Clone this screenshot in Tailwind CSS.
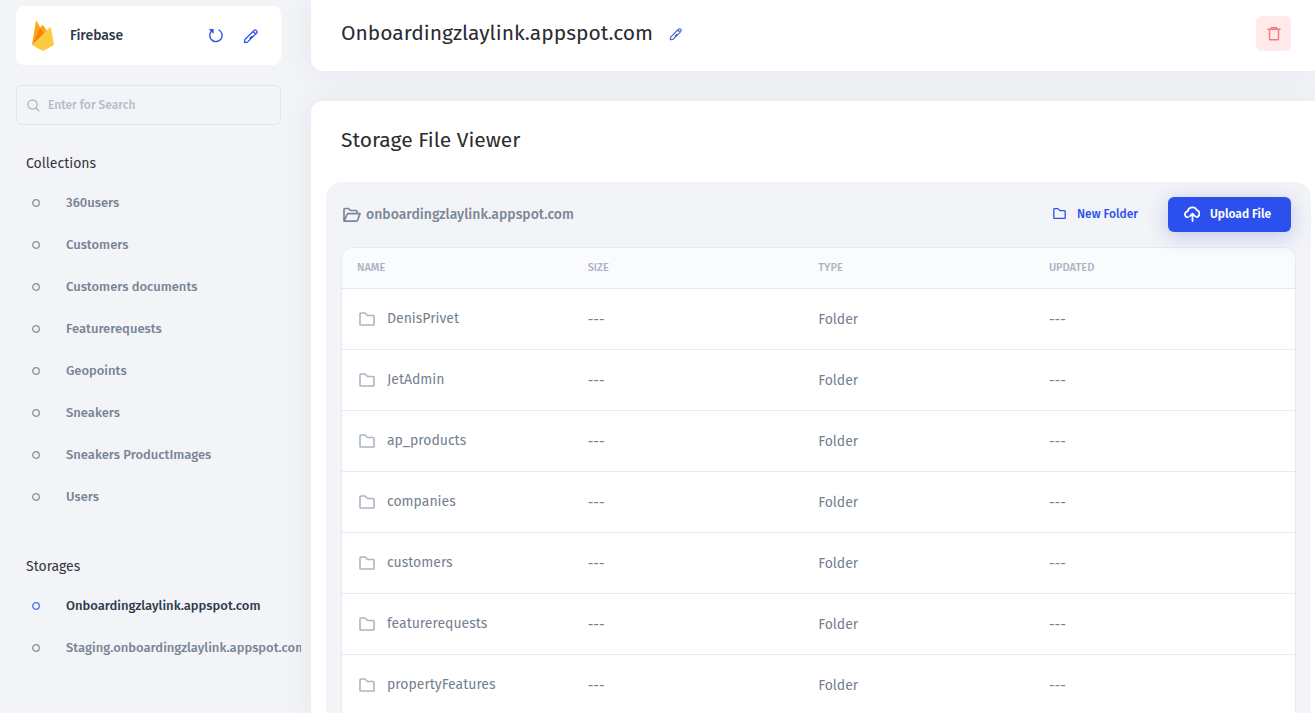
<!DOCTYPE html>
<html lang="en">
<head>
<meta charset="utf-8">
<meta name="viewport" content="width=device-width, initial-scale=1">
<title>Storage File Viewer</title>
<script src="https://cdn.jsdelivr.net/npm/@tailwindcss/browser@4"></script>
</head>
<body class="h-screen overflow-hidden bg-[#f3f4f8] font-['Fira_Sans','Noto_Sans',sans-serif] text-[#74808f]">
<svg class="hidden" aria-hidden="true">
  <symbol id="pencil" viewBox="0 0 16 16" fill="none" stroke="currentColor" stroke-width="1.3" stroke-linejoin="round" stroke-linecap="round"><path d="M1.500 14.500l.4-3L10.800 2.600q1.300-1.300 2.600 0t0 2.600L4.500 14.100zM10 3.400L12.600 6M7 10.200l1.800-1.800"/></symbol>
  <symbol id="folder" viewBox="0 0 18 16" fill="none" stroke="currentColor" stroke-width="1.6" stroke-linejoin="round"><path d="M2 13.500V3q0-1 1-1h4l2.500 2.500H15q1 0 1 1v8q0 .5-.5.5h-13q-.5 0-.5-.5z"/></symbol>
  <symbol id="ring" viewBox="0 0 8 8" fill="none" stroke="currentColor" stroke-width="1.3"><circle cx="4" cy="4" r="3.300"/></symbol>
</svg>
<div class="flex h-full">
  <aside class="w-[301px] shrink-0 overflow-hidden pl-4 pt-1.5">
    <div class="mr-5 flex h-[59px] items-center rounded-lg bg-white pl-4 pr-[22px]">
      <svg class="h-[30px] w-[22px]" viewBox="0 0 22 30"><path fill="#ffa712" d="M0 24L3.800.8Q4.200-.4 5 .6l3.200 6L10 4.600q.7-1 1.400 0L15 10z"/><path fill="#f4820b" d="M0 24L8.200 7l4.500 6z"/><path fill="#fcca3f" d="M0 24L17.800 6.400q.9-.6 1.200.5L22 24l-10 5.600q-1 .5-2 0z"/></svg>
      <span class="ml-4 grow text-[14px] font-medium text-[#2c3a4c]">Firebase</span>
      <button aria-label="Refresh" class="mr-[19px] text-[#2b50ed]"><svg class="size-4" viewBox="0 0 16 16" fill="none" stroke="currentColor" stroke-width="1.400" stroke-linecap="round" stroke-linejoin="round"><path d="M11 2a6.200 6.200 0 1 1-7 .6M1.900 1.800H5v3"/></svg></button>
      <button aria-label="Edit resource" class="text-[#2b50ed]"><svg class="size-4"><use href="#pencil"/></svg></button>
    </div>
    <label class="mr-5 mt-5 flex h-10 items-center gap-2 rounded-md border border-[#e1e5eb] pl-2.5">
      <svg class="size-[13px] text-[#b3bdca]" viewBox="0 0 14 14" fill="none" stroke="currentColor" stroke-width="1.600" stroke-linecap="round"><circle cx="6" cy="6" r="4.900"/><path d="M9.700 9.700l3 3"/></svg>
      <input type="text" aria-label="Search" placeholder="Enter for Search" class="min-w-0 grow bg-transparent text-[12px] font-medium outline-none placeholder:text-[#b3bdca]">
    </label>
    <h2 class="ml-2.5 mt-[29px] text-[14px] leading-5 text-[#33363c]">Collections</h2>
    <nav id="collections" class="mt-2 text-[13px] font-medium text-[#788494]"></nav>
    <h2 class="ml-2.5 mt-[39px] text-[14px] leading-5 text-[#33363c]">Storages</h2>
    <nav id="storages" class="mt-2 text-[13px] font-medium text-[#788494]"></nav>
  </aside>
  <main class="ml-2.5 flex min-w-0 grow flex-col gap-[30px]">
    <header class="flex h-[71px] shrink-0 items-center rounded-bl-xl bg-white pb-1 pl-[30px] pr-6 shadow-[0_0_30px_#28283c12]">
      <h1 class="text-[21px] text-[#2a2c30]">Onboardingzlaylink.appspot.com</h1>
      <button aria-label="Rename storage" class="ml-4 text-[#4763d0]"><svg class="size-[14px]"><use href="#pencil"/></svg></button>
      <button aria-label="Delete storage" class="ml-auto flex size-[35px] items-center justify-center rounded-md bg-[#ffe9ea] text-[#ff7276]"><svg class="h-[14px] w-[14px]" viewBox="0 0 14 14" fill="none" stroke="currentColor" stroke-width="1.400"><path d="M.5 2.200h13M4.500 1.800V.6h5v1.200M2.500 2.500v9.500q0 .8.8.8h7.400q.8 0 .8-.8V2.500"/></svg></button>
    </header>
    <section class="grow rounded-tl-xl bg-white pl-[15px] pr-1 shadow-[0_0_30px_#28283c12]">
      <h2 class="pl-[15px] pt-[23px] text-[21px] leading-8 text-[#2a2c30]">Storage File Viewer</h2>
      <div class="mt-[26px] rounded-t-2xl bg-[#f3f4f8] px-[15px] pt-[15px]">
        <div class="flex h-[35px] items-center pr-[5px]">
          <svg class="ml-0.5 h-[16px] w-[18px] text-[#7b8796]" viewBox="0 0 18 16" fill="none" stroke="currentColor" stroke-width="1.700" stroke-linejoin="round"><path d="M1 14V2.500q0-1 1-1h3.500l2 2H13q1 0 1 1v2M1.200 14.200L4 7.500q.3-.8 1-.8h12l-2.500 6.700q-.4.8-1 .8z"/></svg>
          <span class="ml-[5px] text-[14px] font-medium text-[#7b8796]">onboardingzlaylink.appspot.com</span>
          <button class="ml-auto flex items-center gap-2.5 pb-0.5 text-[12px] font-medium text-[#2b50ed]"><svg class="h-[13px] w-[15px]"><use href="#folder"/></svg>New Folder</button>
          <button class="ml-[30px] flex h-[35px] items-center gap-2.5 rounded-md bg-[#2b50ed] pb-0.5 pl-4 pr-5 text-[12px] font-semibold text-white shadow-[0_4px_20px_#1e3cb440]"><svg class="h-4 w-4" viewBox="0 0 16 16" fill="none" stroke="currentColor" stroke-width="1.800" stroke-linecap="round" stroke-linejoin="round"><path d="M4 11.200A2.900 2.900 0 0 1 3.700 5.400 4.800 4.800 0 0 1 12.800 4.200 3.600 3.600 0 0 1 12.500 11.200M8.500 15V8M6 10.200L8.500 7.700 11 10.200"/></svg>Upload File</button>
        </div>
        <div class="mt-[15px] overflow-hidden rounded-t-xl border border-b-0 border-[#e6eaf0] bg-white">
          <table class="w-full table-fixed text-left text-[14px]">
            <thead class="bg-[#fafbfd]"><tr class="h-10 border-b border-[#e3e8f2] text-[11px] text-[#aab4c3]">
              <th class="w-[24.2%] pl-[15px] font-medium">NAME</th><th class="w-[24.2%] pl-[15px] font-medium">SIZE</th><th class="w-[24.2%] pl-[15px] font-medium">TYPE</th><th class="pl-[15px] font-medium">UPDATED</th>
            </tr></thead>
            <tbody id="files"></tbody>
          </table>
        </div>
      </div>
    </section>
  </main>
</div>
<script>
const link = (name, active) => `<a href="#" class="flex h-[42px] items-center whitespace-nowrap ${active ? 'text-[#2c3a4c]' : ''}"><svg class="ml-4 mr-[26px] size-2 shrink-0 ${active ? 'text-[#4a6cf7]' : 'text-[#8591a0]'}"><use href="#ring"/></svg>${name}</a>`;
document.getElementById('collections').innerHTML = ['360users','Customers','Customers documents','Featurerequests','Geopoints','Sneakers','Sneakers ProductImages','Users'].map(n => link(n, false)).join('');
document.getElementById('storages').innerHTML = link('Onboardingzlaylink.appspot.com', true) + link('Staging.onboardingzlaylink.appspot.com', false);
document.getElementById('files').innerHTML = ['DenisPrivet','JetAdmin','ap_products','companies','customers','featurerequests','propertyFeatures'].map(n => `<tr class="h-[61px] border-b border-[#e8ebf0]"><td class="pl-4"><span class="flex items-center gap-[11px]"><svg class="h-4 w-[18px] text-[#abb5c4]"><use href="#folder"/></svg>${n}</span></td><td class="pl-[15px] pt-0.5">---</td><td class="pl-[15px] pt-0.5">Folder</td><td class="pl-[15px] pt-0.5">---</td></tr>`).join('');
</script>
</body>
</html>
